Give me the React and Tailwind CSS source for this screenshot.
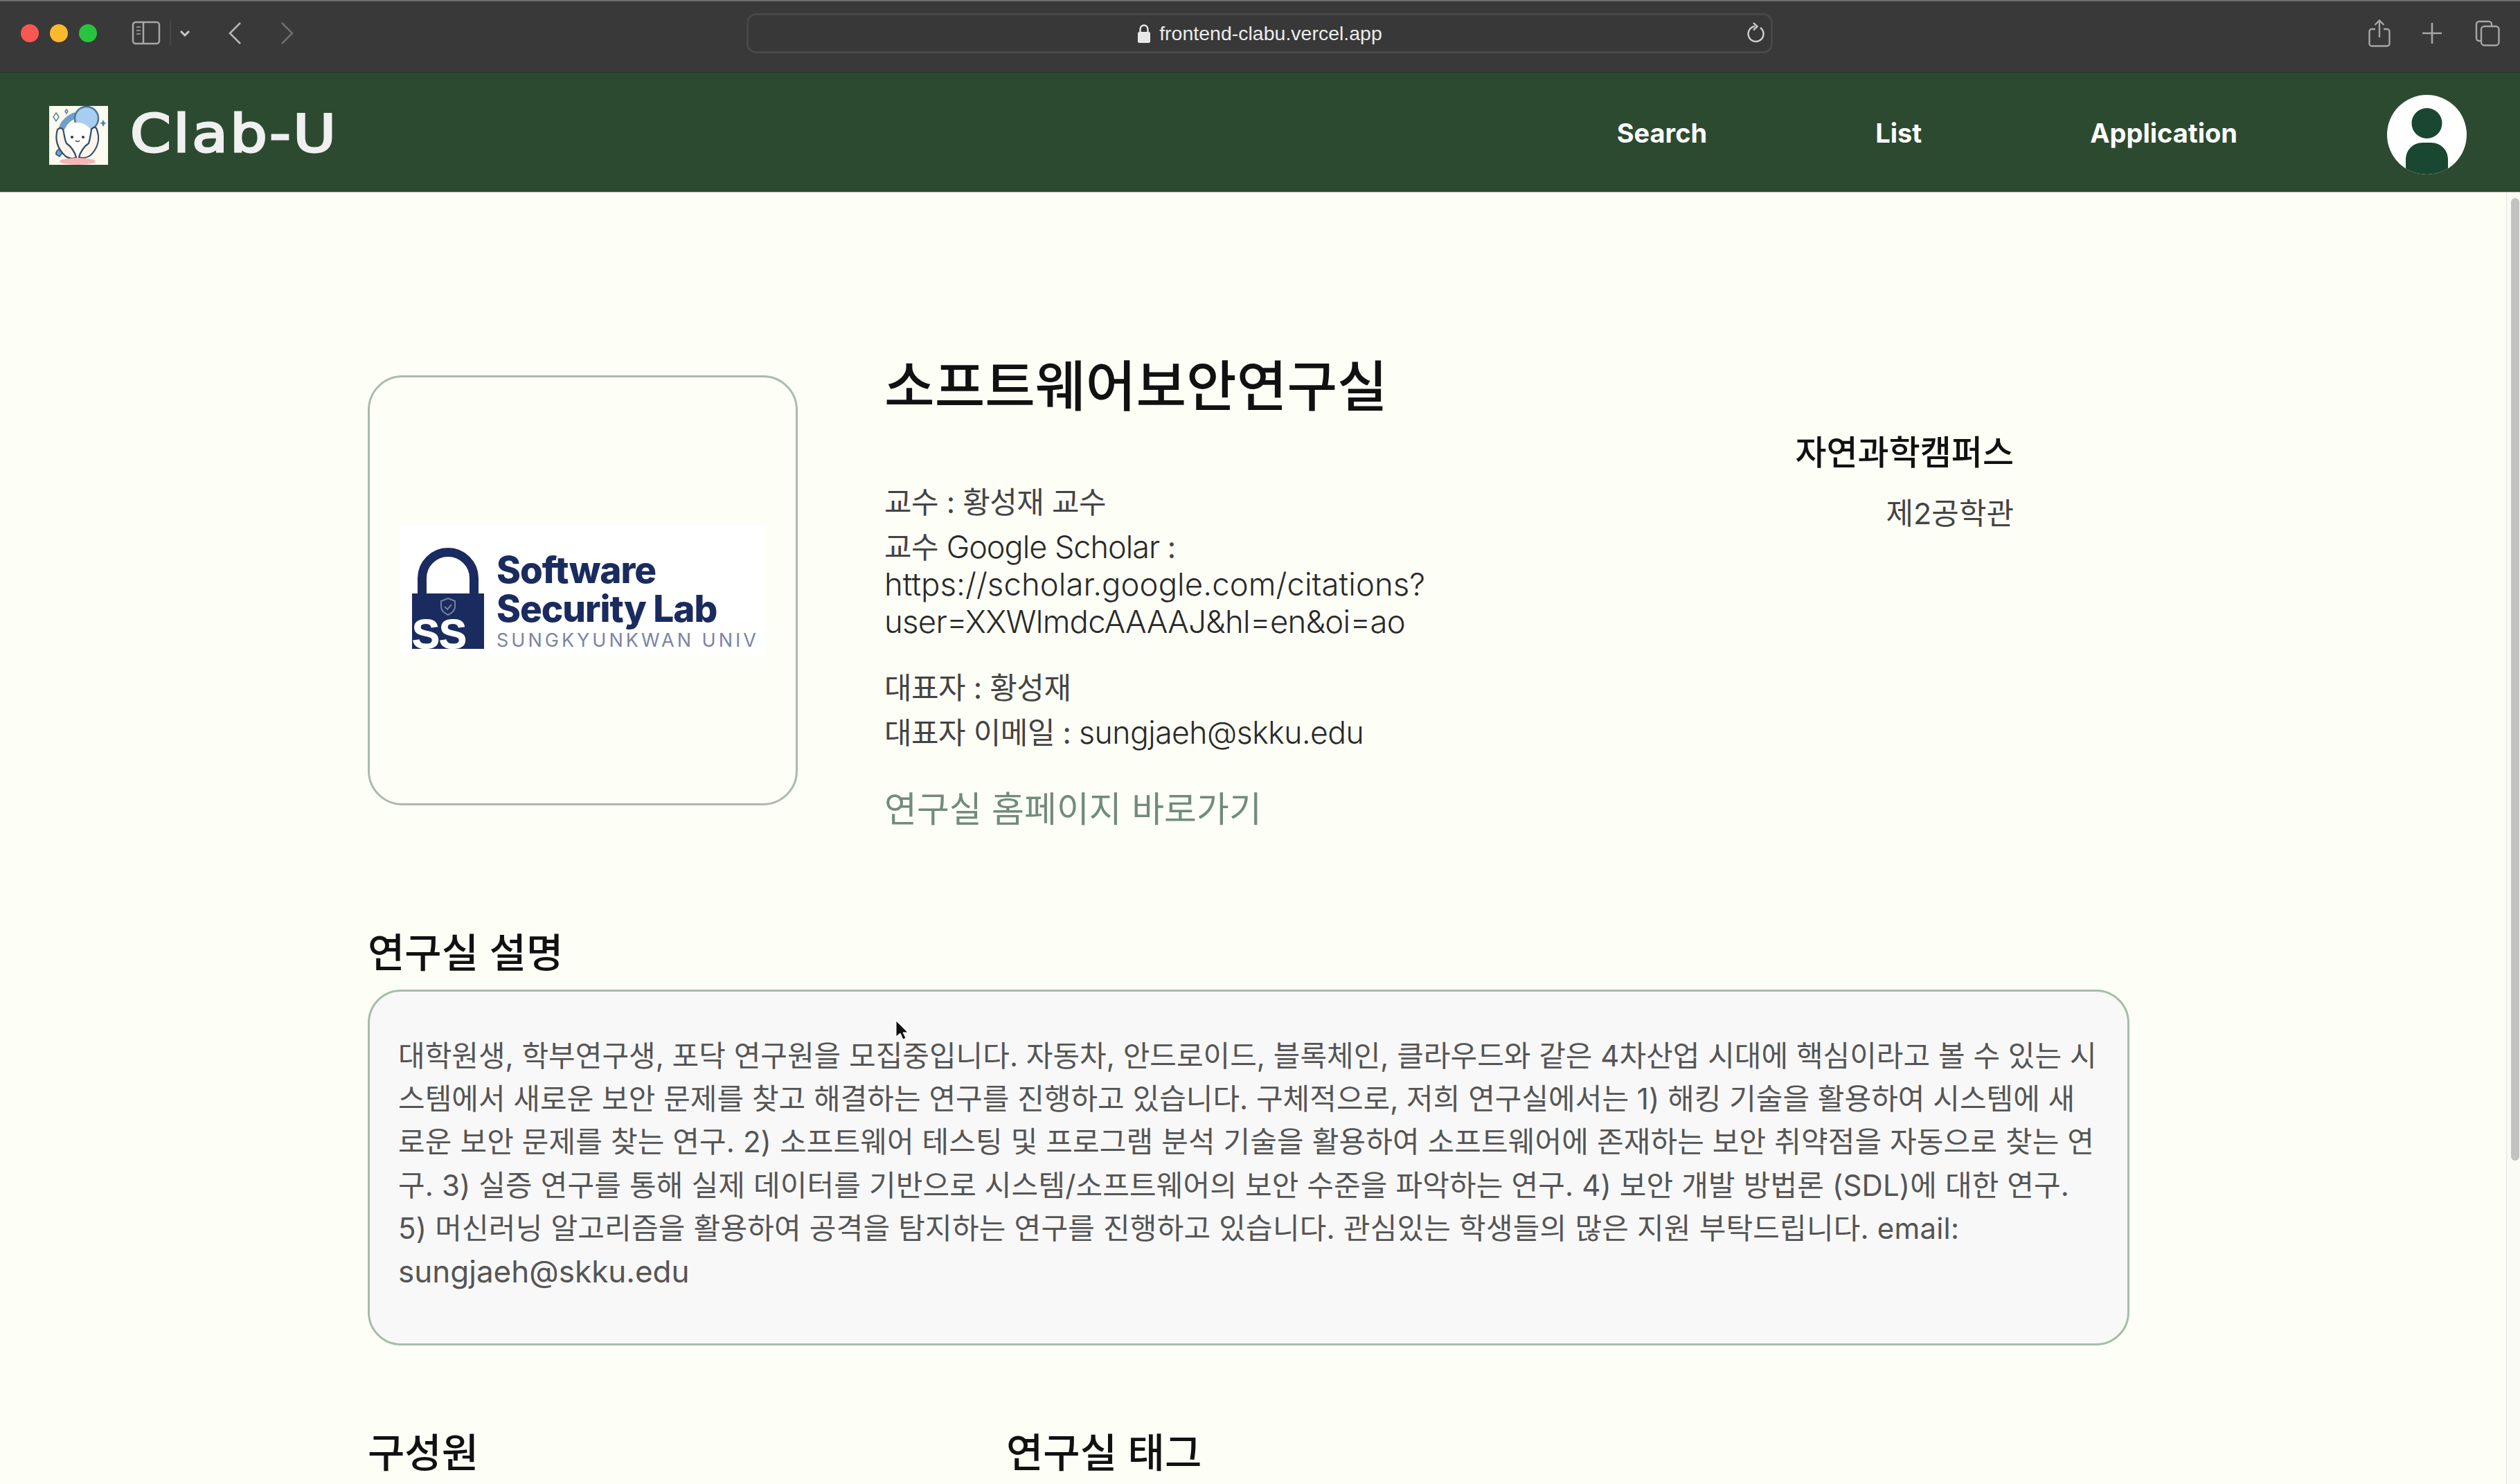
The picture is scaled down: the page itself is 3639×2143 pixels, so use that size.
import React from "react";

const descLines = [
  { text: "대학원생, 학부연구생, 포닥 연구원을 모집중입니다. 자동차, 안드로이드, 블록체인, 클라우드와 같은 4차산업 시대에 핵심이라고 볼 수 있는 시", cls: "" },
  { text: "스템에서 새로운 보안 문제를 찾고 해결하는 연구를 진행하고 있습니다. 구체적으로, 저희 연구실에서는 1) 해킹 기술을 활용하여 시스템에 새", cls: "" },
  { text: "로운 보안 문제를 찾는 연구. 2) 소프트웨어 테스팅 및 프로그램 분석 기술을 활용하여 소프트웨어에 존재하는 보안 취약점을 자동으로 찾는 연", cls: "tracking-[0.1px]" },
  { text: "구. 3) 실증 연구를 통해 실제 데이터를 기반으로 시스템/소프트웨어의 보안 수준을 파악하는 연구. 4) 보안 개발 방법론 (SDL)에 대한 연구.", cls: "tracking-[0.12px]" },
  { text: "5) 머신러닝 알고리즘을 활용하여 공격을 탐지하는 연구를 진행하고 있습니다. 관심있는 학생들의 많은 지원 부탁드립니다. email:", cls: "tracking-[0.18px]" },
  { text: "sungjaeh@skku.edu", cls: "text-[44px]" },
];

const BrowserBar = () => (
  <div className="h-[105px] shrink-0 bg-[#393939] border-t-2 border-[#6b6b6b] border-b border-b-[#263326] flex items-center relative">
    <div className="flex items-center gap-[16px] ml-[30px] -mt-[10px]">
      <span className="w-[26px] h-[26px] rounded-full bg-[#fb5652]" />
      <span className="w-[26px] h-[26px] rounded-full bg-[#fdb92e]" />
      <span className="w-[26px] h-[26px] rounded-full bg-[#27c53f]" />
    </div>
    <svg className="ml-[50px] -mt-[10px]" width="90" height="40" viewBox="0 0 90 40" fill="none" stroke="#a8a8a8" strokeWidth="2.5">
      <rect x="2" y="4" width="38" height="31" rx="4" />
      <path d="M17 4v31" />
      <path d="M7 11h6M7 16h6M7 21h6" strokeWidth="2" stroke="#8a8a8a" />
      <path d="M56 0v38" stroke="#4d4d4d" strokeWidth="1.5" />
      <path d="M71 17l6 6 6-6" stroke="#c8c8c8" strokeWidth="3" />
    </svg>
    <svg className="ml-[48px] -mt-[10px]" width="22" height="34" viewBox="0 0 22 34" fill="none" stroke="#b5b5b5" strokeWidth="2.6">
      <path d="M19 2L4 17l15 15" />
    </svg>
    <svg className="ml-[54px] -mt-[10px]" width="22" height="34" viewBox="0 0 22 34" fill="none" stroke="#6e6e6e" strokeWidth="2.6">
      <path d="M3 2l15 15L3 32" />
    </svg>
    <div className="ml-[652px] -mt-[10px] w-[1482px] h-[58px] rounded-[14px] border-[3px] border-[#484848] bg-[#383838] flex items-center relative">
      <div className="flex-1 flex justify-center items-center gap-[12px] pl-[36px]">
        <svg width="20" height="27" viewBox="0 0 20 27" fill="#e8e8e8">
          <rect x="1" y="11" width="18" height="16" rx="2.5" />
          <path d="M4.5 12V7a5.5 5.5 0 0 1 11 0v5" fill="none" stroke="#e8e8e8" strokeWidth="2.4" />
        </svg>
        <span className="text-[28.500px] leading-none font-medium text-[#ececec] font-['Liberation_Sans',sans-serif]">frontend-clabu.vercel.app</span>
      </div>
      <svg className="mr-[9px]" width="27" height="32" viewBox="0 0 27 32" fill="none" stroke="#d0d0d0" strokeWidth="2.4">
        <path d="M21 8a11 11 0 1 1-8-2" />
        <path d="M11 1l5.500 5.200L11 11.500" />
      </svg>
    </div>
    <div className="ml-auto flex items-center -mt-[10px] mr-[29px]">
      <svg width="32" height="40" viewBox="0 0 32 40" fill="none" stroke="#a6a6a6" strokeWidth="2.4">
        <path d="M10 14H5a3.5 3.5 0 0 0-3.5 3.500V35A3.500 3.500 0 0 0 5 38.500h22a3.500 3.500 0 0 0 3.500-3.500V17.500A3.500 3.500 0 0 0 27 14h-5" />
        <path d="M16 26V2M9.500 8L16 1.500 22.500 8" />
      </svg>
      <svg className="ml-[46px]" width="28" height="30" viewBox="0 0 28 30" fill="none" stroke="#a6a6a6" strokeWidth="2.6">
        <path d="M14 0v30M0 15h28" />
      </svg>
      <svg className="ml-[48px]" width="36" height="38" viewBox="0 0 36 38" fill="none" stroke="#a6a6a6" strokeWidth="2.4">
        <path d="M8 30H6a4 4 0 0 1-4-4V6a4 4 0 0 1 4-4h14a4 4 0 0 1 4 4v2" />
        <rect x="9" y="9" width="25.500" height="27.500" rx="4.500" />
      </svg>
    </div>
  </div>
);

const ClabLogo = () => (
  <svg width="85" height="85" viewBox="0 0 85 85">
    <rect width="85" height="85" fill="#fbfbf0" />
    <path d="M18 48C14 30 24 20 36 14" fill="none" stroke="#6f9fcb" strokeWidth="9" strokeLinecap="round" />
    <circle cx="54" cy="18" r="17" fill="#a9cdf0" stroke="#4a7497" strokeWidth="2.500" />
    <ellipse cx="41" cy="50" rx="24" ry="26" fill="#ffffff" stroke="#dfe7ea" />
    <path d="M10 70a7 7 0 0 1 8-8l3 3-6 8z" fill="#6f9fcb" stroke="#34536e" strokeWidth="1.500" />
    <path d="M12 34c-4 14 0 28 12 39 5 3 12 4 15 1-2-8-8-16-14-20-3-6-3-13-5-20-2-3-6-2-8 0z" fill="#fdf4ee" stroke="#2d4d68" strokeWidth="2.200" />
    <path d="M68 32c6 14 3 28-8 39-5 4-12 5-17 3 2-8 8-16 14-20 2-6 3-13 4-20 2-3 5-4 7-2z" fill="#fdf4ee" stroke="#2d4d68" strokeWidth="2.200" />
    <circle cx="33" cy="45" r="2" fill="#27384a" />
    <circle cx="49" cy="45" r="2" fill="#27384a" />
    <path d="M38 50c2 2 4 2 6 0" fill="none" stroke="#27384a" strokeWidth="1.500" />
    <ellipse cx="41" cy="80" rx="26" ry="5" fill="#f5b6b6" />
    <path d="M10 10l4 6-4 6-4-6z M25 5l2 3-2 3-2-3z" fill="none" stroke="#5a7f9f" strokeWidth="1.500" />
    <path d="M78 20l2 4 3 1-3 1-2 4-2-4-3-1 3-1z" fill="#5a7f9f" />
  </svg>
);

const NavBar = () => (
  <div className="h-[173px] shrink-0 bg-[#2c4a30] border-b border-b-[#b9c2b7] flex items-center font-['Inter',sans-serif]">
    <div className="ml-[71px] mt-[8px]">
      <ClabLogo />
    </div>
    <span className="ml-[32px] mt-[4px] origin-left scale-x-[1.14] text-[74px] leading-none tracking-[3px] text-[#f0f0f0] font-['DejaVu_Sans',sans-serif] [-webkit-text-stroke:3px_#f0f0f0]">
      Clab-U
    </span>
    <div className="ml-auto flex items-center gap-[243px] mr-[77px]">
      <span className="text-[38px] font-bold text-white leading-none mt-[2px]">Search</span>
      <span className="text-[38px] font-bold text-white leading-none mt-[2px]">List</span>
      <span className="text-[38px] font-bold text-white leading-none mt-[2px] mr-[-27px]">Application</span>
      <svg className="mt-[7px]" width="115" height="115" viewBox="0 0 115 115">
        <defs>
          <clipPath id="avatar-clip">
            <circle cx="57.500" cy="57.500" r="57.500" />
          </clipPath>
        </defs>
        <circle cx="57.500" cy="57.500" r="57.500" fill="#ffffff" />
        <g clipPath="url(#avatar-clip)" fill="#1a4731">
          <ellipse cx="57.500" cy="41" rx="22" ry="22" />
          <path d="M27 115V93a24 24 0 0 1 24-24h13a24 24 0 0 1 24 24v22z" />
        </g>
      </svg>
    </div>
  </div>
);

const LabLogo = () => (
  <div className="w-[529px] h-[187px] bg-white flex items-center pl-[18px]">
    <svg className="shrink-0 mt-[22px] overflow-visible" width="104" height="146" viewBox="0 0 104 146">
      <path d="M14.500 68V44a37.500 37.500 0 0 1 75 0v24" fill="none" stroke="#1a2b5f" strokeWidth="13" />
      <path d="M0 66h104v80H0z" fill="#1a2b5f" />
      <path d="M52 73l10 4v8c0 5-4 9-10 12-6-3-10-7-10-12v-8z" fill="none" stroke="#76829f" strokeWidth="2" />
      <path d="M47 85l4 4 6-7" fill="none" stroke="#76829f" strokeWidth="2" />
      <text x="0" y="145" fontFamily="Liberation Sans, sans-serif" fontWeight="700" fontSize="60" letterSpacing="-1" fill="#ffffff" stroke="#ffffff" strokeWidth="1">SS</text>
    </svg>
    <div className="ml-[18px] mt-[30px] flex flex-col font-['Inter',sans-serif]">
      <span className="text-[53px] leading-[56px] font-extrabold text-[#1a2b5f] tracking-[-1px]">Software</span>
      <span className="text-[53px] leading-[56px] font-extrabold text-[#1a2b5f] tracking-[-1px] whitespace-nowrap">Security Lab</span>
      <span className="mt-[3px] text-[27px] leading-[30px] text-[#7a85a3] tracking-[4px] whitespace-nowrap">SUNGKYUNKWAN UNIV</span>
    </div>
  </div>
);

export default function App() {
  return (
    <div className="w-[3639px] h-[2143px] overflow-hidden flex flex-col bg-[#fdfff7] relative font-['Inter','Noto_Sans_CJK_KR',sans-serif]">
      <BrowserBar />
      <NavBar />
      <div className="flex-1 flex min-h-0">
        <div className="flex-1 pl-[531px] pt-[228px]">
          <div className="flex w-[2377px]">
            <div className="w-[621px] h-[621px] mt-[36px] shrink-0 rounded-[50px] border-[3px] border-[#a9bba9] flex items-center justify-center">
              <LabLogo />
            </div>
            <div className="ml-[125px] flex flex-col text-[#444444]">
              <h1 className="text-[79px] leading-[104px] font-medium text-[#111111]">소프트웨어보안연구실</h1>
              <p className="mt-[88px] text-[43px] leading-[54px] tracking-[-0.5px]">교수 : 황성재 교수</p>
              <p className="mt-[11px] text-[43px] leading-[54px] tracking-[-0.5px]">
                교수 <span className="text-[45px] font-light text-[#2a2a2a] tracking-[-1px]">Google Scholar</span> :<br />
                <span className="text-[45.500px] font-light text-[#2a2a2a] tracking-[0.07px]">https://scholar.google.com/citations?</span><br />
                <span className="text-[45.500px] font-light text-[#2a2a2a] tracking-[-0.73px]">user=XXWlmdcAAAAJ&amp;hl=en&amp;oi=ao</span>
              </p>
              <p className="mt-[41px] text-[43px] leading-[54px] tracking-[-0.5px]">대표자 : 황성재</p>
              <p className="mt-[11px] text-[43px] leading-[54px] tracking-[-0.5px]">
                대표자 이메일 : <span className="text-[44.500px] font-light text-[#2a2a2a]">sungjaeh@skku.edu</span>
              </p>
              <p className="mt-[52px] text-[51px] leading-[64px] text-[#718c78]">연구실 홈페이지 바로가기</p>
            </div>
            <div className="ml-auto mt-[118px] text-right">
              <p className="text-[49px] leading-[60px] font-medium text-[#111111]">자연과학캠퍼스</p>
              <p className="mt-[30px] text-[43px] leading-[54px] text-[#444444]">제2공학관</p>
            </div>
          </div>
          <h2 className="mt-[140px] text-[58px] leading-[70px] font-medium text-[#111111]">연구실 설명</h2>
          <div className="mt-[18px] w-[2544px] h-[514px] rounded-[48px] border-[3px] border-[#a9bba9] bg-[#f8f8f8] pl-[41px] pt-[62px] text-[42px] leading-[62.200px] text-[#555555] whitespace-nowrap">
            {descLines.map((line) => (
              <div key={line.text} className={line.cls}>{line.text}</div>
            ))}
          </div>
          <div className="flex mt-[120px]">
            <h2 className="w-[922px] text-[58px] leading-[70px] font-medium text-[#111111]">구성원</h2>
            <h2 className="text-[58px] leading-[70px] font-medium text-[#111111]">연구실 태그</h2>
          </div>
        </div>
        <div className="w-[20px] shrink-0 border-l border-l-[#e6e6e0] bg-[#fbfbf6] pt-[8px] pl-[6px]">
          <div className="w-[12px] h-[1390px] rounded-full bg-[#c2c2c2]" />
        </div>
      </div>
      <svg className="absolute left-[1293px] top-[1473px]" width="18" height="30" viewBox="0 0 18 30">
        <path d="M1 1v23l6-5 4 9 4-2-4-8h7z" fill="#111111" stroke="#ffffff" strokeWidth="1" />
      </svg>
    </div>
  );
}
